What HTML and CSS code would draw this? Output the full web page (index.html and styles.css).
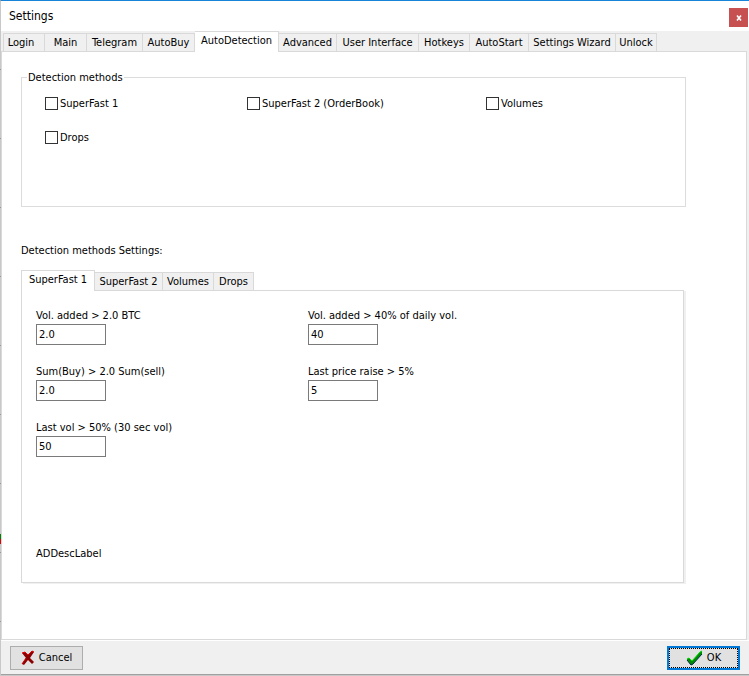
FILE: index.html
```html
<!DOCTYPE html>
<html lang="en">
<head>
    <meta charset="UTF-8">
    <meta name="viewport" content="width=device-width, initial-scale=1.0">
    <title>Settings</title>
    <link rel="stylesheet" href="styles.css">
</head>
<body>
    <div class="window">
        <div class="titlebar">
            <h1>Settings</h1>
            <button class="close" aria-label="Close">
                <svg width="6" height="6" viewBox="0 0 6 6"><path d="M1 0.5 L5 5.5 M5 0.5 L1 5.5" stroke="#fff" stroke-width="1.6"/></svg>
            </button>
        </div>

        <div class="tabs main-tabs" role="tablist">
            <button class="tab" role="tab">Login</button>
            <button class="tab" role="tab">Main</button>
            <button class="tab" role="tab">Telegram</button>
            <button class="tab" role="tab">AutoBuy</button>
            <button class="tab active" role="tab" aria-selected="true">AutoDetection</button>
            <button class="tab" role="tab">Advanced</button>
            <button class="tab" role="tab">User Interface</button>
            <button class="tab" role="tab">Hotkeys</button>
            <button class="tab" role="tab">AutoStart</button>
            <button class="tab" role="tab">Settings Wizard</button>
            <button class="tab" role="tab">Unlock</button>
        </div>

        <div class="page" role="tabpanel">
            <fieldset class="methods">
                <legend>Detection methods</legend>
                <div class="method-list">
                    <label class="check"><input type="checkbox">SuperFast 1</label>
                    <label class="check"><input type="checkbox">SuperFast 2 (OrderBook)</label>
                    <label class="check"><input type="checkbox">Volumes</label>
                    <label class="check"><input type="checkbox">Drops</label>
                </div>
            </fieldset>

            <h2>Detection methods Settings:</h2>

            <div class="tabs sub-tabs" role="tablist">
                <button class="tab active" role="tab" aria-selected="true">SuperFast 1</button>
                <button class="tab" role="tab">SuperFast 2</button>
                <button class="tab" role="tab">Volumes</button>
                <button class="tab" role="tab">Drops</button>
            </div>
            <div class="method-settings" role="tabpanel">
                <div class="fields">
                    <div class="field">
                        <label for="volBtc">Vol. added &gt; 2.0 BTC</label>
                        <input type="text" id="volBtc" value="2.0">
                    </div>
                    <div class="field">
                        <label for="volDaily">Vol. added &gt; 40% of daily vol.</label>
                        <input type="text" id="volDaily" value="40">
                    </div>
                    <div class="field">
                        <label for="sumBuy">Sum(Buy) &gt; 2.0 Sum(sell)</label>
                        <input type="text" id="sumBuy" value="2.0">
                    </div>
                    <div class="field">
                        <label for="priceRaise">Last price raise &gt; 5%</label>
                        <input type="text" id="priceRaise" value="5">
                    </div>
                    <div class="field">
                        <label for="lastVol">Last vol &gt; 50% (30 sec vol)</label>
                        <input type="text" id="lastVol" value="50">
                    </div>
                </div>
                <p class="description">ADDescLabel</p>
            </div>
        </div>

        <div class="footer">
            <button class="btn">
                <svg width="14" height="16" viewBox="0 0 14 16">
                    <path d="M1 3 L4 2 L7 5 L11 1 L13 2 L9 8 L13 12 L11 14 L7 10 L3 15 L1 14 L5 8 Z" fill="#8b0000"/>
                    <path d="M1 3 L4 2 L7 5 L11 1 L13 2" fill="none" stroke="#e00000"/>
                    <path d="M5 8 L1 14" stroke="#d00000"/>
                </svg>
                Cancel
            </button>
            <button class="btn default">
                <svg width="17" height="16" viewBox="0 0 17 16">
                    <path d="M1 9 L3 8 L6 11 L14 2 L16 1 L16 4 L6 15 L5 15 L1 10 Z" fill="#008a00"/>
                    <path d="M1 10 L5 15 L7 14 L16 4" fill="none" stroke="#003050"/>
                    <path d="M1 9 L3 8 L6 11 L14 2 L16 1" fill="none" stroke="#00d800"/>
                </svg>
                OK
            </button>
        </div>
    </div>
</body>
</html>
```

FILE: styles.css
```css
* { margin: 0; padding: 0; box-sizing: border-box; }
body { font-family: Tahoma, 'DejaVu Sans Condensed', 'Noto Sans', sans-serif; font-size: 11px; line-height: 14px; color: #000; background: linear-gradient(#008000, #008000) 0 534px / 1px 5px no-repeat, linear-gradient(#e00000, #e00000) 0 539px / 1px 5px no-repeat, repeating-linear-gradient(#999 0 1px, #c8c8c8 1px 69px); }
button, input { font: inherit; color: inherit; }
.window { display: flex; flex-direction: column; min-height: calc(100vh - 1px); margin: 0 0 1px 1px; background: #f0f0f0; border-top: 1px solid #1883d7; border-bottom: 1px solid #a0a0a0; }
.titlebar { display: flex; justify-content: space-between; align-items: flex-start; height: 30px; padding: 7px 1px 0 8px; background: #fff; }
.titlebar h1 { font-size: 12px; font-weight: normal; line-height: 16px; }
.close { display: flex; align-items: center; justify-content: center; width: 19px; height: 19px; background: #c75050; border: none; }

.tabs { display: grid; align-items: end; position: relative; z-index: 1; height: 21px; }
.tab { height: 19px; padding-top: 1px; background: #f0f0f0; border: 1px solid #d9d9d9; border-width: 1px 1px 1px 0; text-align: center; white-space: nowrap; }
.tab:first-child { padding-right: 6px; border-left-width: 1px; }
.tab.active { height: 21px; padding: 0 0 2px; background: #fff; border-bottom: none; }
.main-tabs { grid-template-columns: 42px 42px 56px 52px 84px 58px 82px 51px 59px 87px 41px; padding-left: 2px; }
.sub-tabs { grid-template-columns: 74px 68px 51px 40px; margin-top: 12px; }

.page { flex: 1; margin: -1px 2px 0 0; padding: 17px 60px 56px 19px; background: #fff; border: 1px solid #d9d9d9; }
.methods { height: 138px; padding: 12px 23px; border: 1px solid #dcdcdc; }
.methods legend { margin-left: -18px; padding: 2px 1px 0; }
.method-list { display: grid; grid-template-columns: 202px 239px auto; row-gap: 20px; }
.check { display: flex; align-items: flex-start; gap: 2px; }
.check input { appearance: none; width: 13px; height: 13px; background: #fff; border: 1px solid #333; }

.page h2 { margin-top: 37px; font-size: 11px; font-weight: normal; }
.method-settings { min-height: 293px; margin-top: -1px; margin-right: 2px; padding: 18px 14px; border: 1px solid #d9d9d9; box-shadow: 2px 1px 0 #f0f0f0; }
.fields { display: grid; grid-template-columns: 272px auto; row-gap: 20px; }
.field { display: flex; flex-direction: column; align-items: flex-start; gap: 1px; }
.field input { width: 70px; height: 21px; padding: 0 2px; background: #fff; border: 1px solid #7a7a7a; }
.description { margin-top: 90px; }

.footer { display: flex; justify-content: space-between; padding: 5px 9px 4px; border-top: 1px solid #fff; }
.btn { display: flex; align-items: center; justify-content: center; gap: 4px; width: 73px; height: 24px; background: #e1e1e1; border: 1px solid #adadad; }
.btn.default { border: 2px solid #0078d7; outline: 1px dotted #000; outline-offset: -3px; }
```
